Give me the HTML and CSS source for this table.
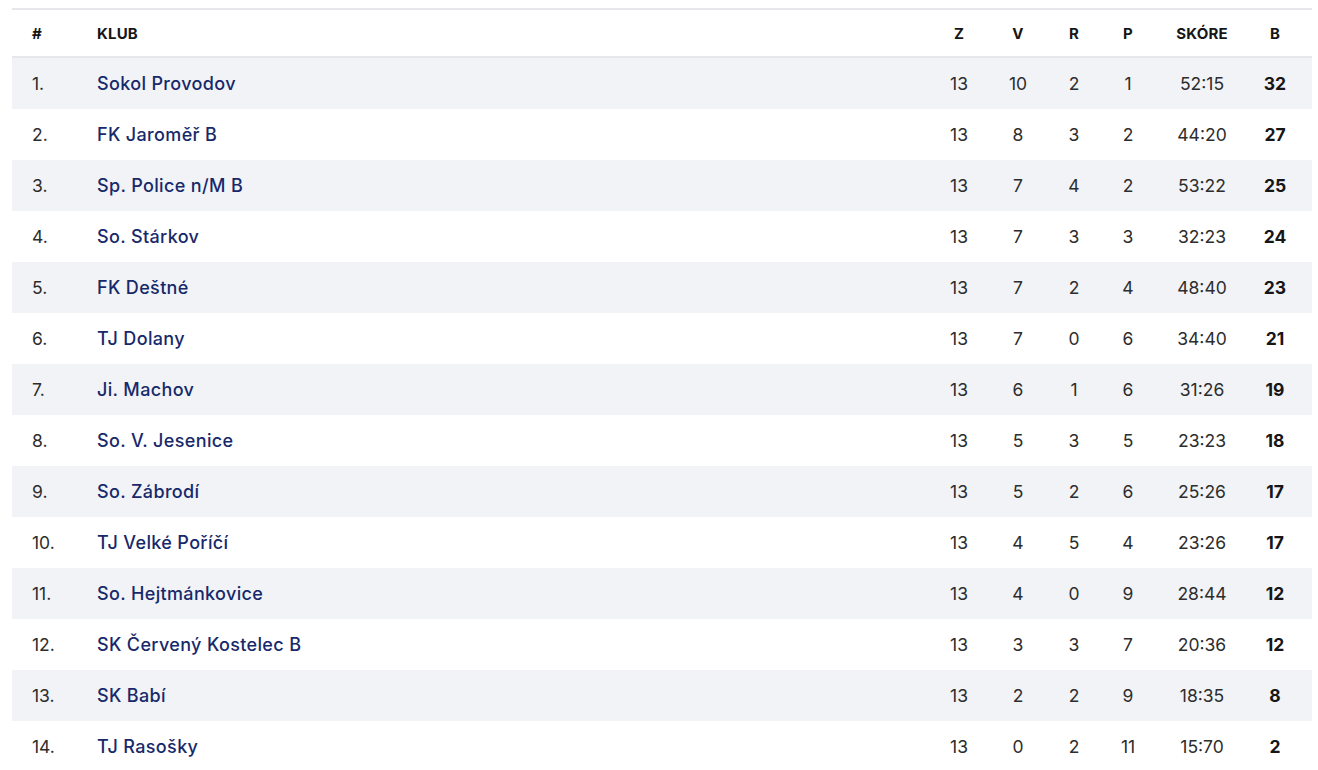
FILE: index.html
```html
<!DOCTYPE html>
<html lang="cs">
<head>
<meta charset="utf-8">
<title>Tabulka</title>
<link rel="stylesheet" href="styles.css">
</head>
<body>
<table class="standings">
  <colgroup>
    <col class="c-pos"><col class="c-club"><col class="c-z"><col class="c-v"><col class="c-r"><col class="c-p"><col class="c-score"><col class="c-pts">
  </colgroup>
  <thead>
    <tr><th class="pos">#</th><th class="club">KLUB</th><th>Z</th><th>V</th><th>R</th><th>P</th><th>SKÓRE</th><th class="pts">B</th></tr>
  </thead>
  <tbody>
    <tr><td class="pos">1.</td><td class="club">Sokol Provodov</td><td>13</td><td>10</td><td>2</td><td>1</td><td>52:15</td><td class="pts">32</td></tr>
    <tr><td class="pos">2.</td><td class="club">FK Jaroměř B</td><td>13</td><td>8</td><td>3</td><td>2</td><td>44:20</td><td class="pts">27</td></tr>
    <tr><td class="pos">3.</td><td class="club">Sp. Police n/M B</td><td>13</td><td>7</td><td>4</td><td>2</td><td>53:22</td><td class="pts">25</td></tr>
    <tr><td class="pos">4.</td><td class="club">So. Stárkov</td><td>13</td><td>7</td><td>3</td><td>3</td><td>32:23</td><td class="pts">24</td></tr>
    <tr><td class="pos">5.</td><td class="club">FK Deštné</td><td>13</td><td>7</td><td>2</td><td>4</td><td>48:40</td><td class="pts">23</td></tr>
    <tr><td class="pos">6.</td><td class="club">TJ Dolany</td><td>13</td><td>7</td><td>0</td><td>6</td><td>34:40</td><td class="pts">21</td></tr>
    <tr><td class="pos">7.</td><td class="club">Ji. Machov</td><td>13</td><td>6</td><td>1</td><td>6</td><td>31:26</td><td class="pts">19</td></tr>
    <tr><td class="pos">8.</td><td class="club">So. V. Jesenice</td><td>13</td><td>5</td><td>3</td><td>5</td><td>23:23</td><td class="pts">18</td></tr>
    <tr><td class="pos">9.</td><td class="club">So. Zábrodí</td><td>13</td><td>5</td><td>2</td><td>6</td><td>25:26</td><td class="pts">17</td></tr>
    <tr><td class="pos">10.</td><td class="club">TJ Velké Poříčí</td><td>13</td><td>4</td><td>5</td><td>4</td><td>23:26</td><td class="pts">17</td></tr>
    <tr><td class="pos">11.</td><td class="club">So. Hejtmánkovice</td><td>13</td><td>4</td><td>0</td><td>9</td><td>28:44</td><td class="pts">12</td></tr>
    <tr><td class="pos">12.</td><td class="club">SK Červený Kostelec B</td><td>13</td><td>3</td><td>3</td><td>7</td><td>20:36</td><td class="pts">12</td></tr>
    <tr><td class="pos">13.</td><td class="club">SK Babí</td><td>13</td><td>2</td><td>2</td><td>9</td><td>18:35</td><td class="pts">8</td></tr>
    <tr><td class="pos">14.</td><td class="club">TJ Rasošky</td><td>13</td><td>0</td><td>2</td><td>11</td><td>15:70</td><td class="pts">2</td></tr>
  </tbody>
</table>
</body>
</html>
```
FILE: styles.css
```css
html, body {
  margin: 0;
  padding: 0;
  background: #ffffff;
}
body {
  padding: 8px 6px 0 12px;
  font-family: Inter, "Noto Sans", "Liberation Sans", sans-serif;
  color: #2b2b2b;
}
.standings {
  width: 1300px;
  border-collapse: collapse;
  table-layout: fixed;
  border-top: 2px solid #e6e7ea;
}
.c-pos { width: 85px; }
.c-z { width: 58px; }
.c-v { width: 60px; }
.c-r { width: 52px; }
.c-p { width: 56px; }
.c-score { width: 92px; }
.c-pts { width: 64px; }
.standings th {
  height: 46px;
  padding: 0;
  font-size: 15px;
  font-weight: 700;
  color: #161616;
  text-align: center;
  border-bottom: 2px solid #e6e7ea;
  letter-spacing: 0.2px;
}
.standings td {
  height: 51px;
  padding: 0;
  font-size: 17.5px;
  font-weight: 400;
  text-align: center;
  color: #2d2d2d;
}
.standings tbody tr:nth-child(odd) td {
  background: #f1f3f7;
}
.standings .pos {
  text-align: left;
  padding-left: 20px;
}
.standings .club {
  text-align: left;
}
.standings td.club {
  color: #17296a;
  font-size: 18px;
  font-weight: 500;
  letter-spacing: 0.35px;
}
.standings .pts {
  padding-right: 10px;
}
.standings td.pts {
  font-weight: 700;
  color: #161616;
}
```
